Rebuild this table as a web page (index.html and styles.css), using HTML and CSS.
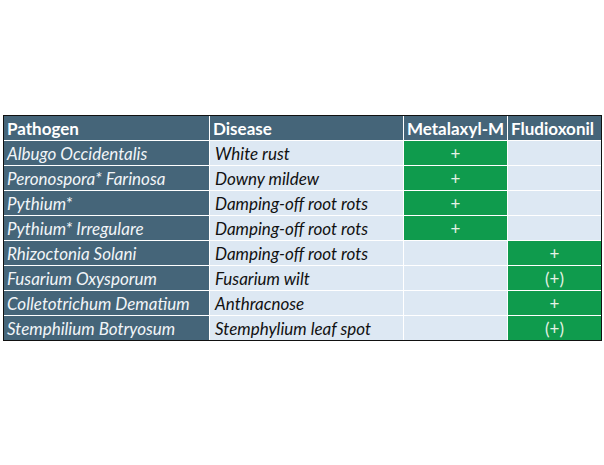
FILE: index.html
```html
<!DOCTYPE html>
<html>
<head>
<meta charset="utf-8">
<link rel="stylesheet" href="styles.css">
</head>
<body>
<div class="page">
  <div class="grid">
    <div class="cell head">Pathogen</div>
    <div class="cell head">Disease</div>
    <div class="cell head">Metalaxyl-M</div>
    <div class="cell head">Fludioxonil</div>

    <div class="cell path">Albugo Occidentalis</div>
    <div class="cell dis">White rust</div>
    <div class="cell on">+</div>
    <div class="cell off"></div>

    <div class="cell path">Peronospora* Farinosa</div>
    <div class="cell dis">Downy mildew</div>
    <div class="cell on">+</div>
    <div class="cell off"></div>

    <div class="cell path">Pythium*</div>
    <div class="cell dis">Damping-off root rots</div>
    <div class="cell on">+</div>
    <div class="cell off"></div>

    <div class="cell path">Pythium* Irregulare</div>
    <div class="cell dis">Damping-off root rots</div>
    <div class="cell on">+</div>
    <div class="cell off"></div>

    <div class="cell path">Rhizoctonia Solani</div>
    <div class="cell dis">Damping-off root rots</div>
    <div class="cell off"></div>
    <div class="cell on">+</div>

    <div class="cell path">Fusarium Oxysporum</div>
    <div class="cell dis">Fusarium wilt</div>
    <div class="cell off"></div>
    <div class="cell on">(+)</div>

    <div class="cell path">Colletotrichum Dematium</div>
    <div class="cell dis">Anthracnose</div>
    <div class="cell off"></div>
    <div class="cell on">+</div>

    <div class="cell path">Stemphilium Botryosum</div>
    <div class="cell dis">Stemphylium leaf spot</div>
    <div class="cell off"></div>
    <div class="cell on">(+)</div>
  </div>
</div>
</body>
</html>
```

FILE: styles.css
```css
html, body {
  margin: 0;
  padding: 0;
  background: #ffffff;
}
.page {
  padding: 115px 0 0 3px;
}
.grid {
  display: grid;
  grid-template-columns: 205px 193px 103px 93px;
  grid-auto-rows: 24px;
  gap: 1px;
  width: 597px;
  background: #ffffff;
  border: 1px solid #111111;
  font-family: Lato, "Open Sans", sans-serif;
  font-size: 17px;
}
.cell {
  display: flex;
  align-items: center;
  padding: 1px 3px 0;
  white-space: nowrap;
  overflow: hidden;
}
.head {
  background: #456579;
  color: #ffffff;
  font-weight: bold;
}
.path {
  background: #456579;
  color: #f2f5f8;
  font-style: italic;
}
.dis {
  background: #dde8f3;
  color: #111111;
  font-style: italic;
  padding-left: 5px;
}
.on {
  background: #0f9b4d;
  color: #e6f2e6;
  justify-content: center;
}
.off {
  background: #dde8f3;
}
```
